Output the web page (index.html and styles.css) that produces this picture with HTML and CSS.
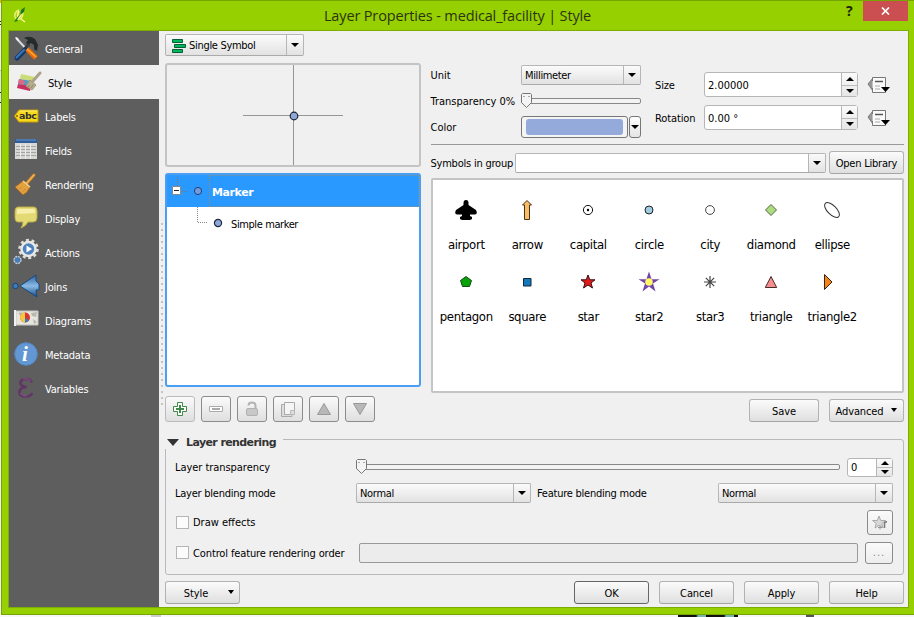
FILE: index.html
```html
<!DOCTYPE html>
<html lang="en">
<head>
<meta charset="utf-8">
<title>Layer Properties - medical_facility | Style</title>
<link rel="stylesheet" href="styles.css">
</head>
<body>
<div class="window">
  <header class="titlebar">
    <svg class="logo" width="14" height="17" viewBox="0 0 14 17"><path d="M6 3Q1 5 2 10Q3 13 7 12Q10 11 10 5" fill="#a9cf17" stroke="#e3ef72" stroke-width="1.500"/><path d="M6 4Q4 7 5 11Q8 11 8 6M8 12L12 15" fill="none" stroke="#fff58a" stroke-width="1.500"/><path d="M12 0L11 5L7 8L8 3Z" fill="#1d7a24"/><path d="M8 6L4 13L5 14L1 15L3 12Z" fill="#1d7a24"/></svg>
    <h1 class="title">Layer Properties - medical_facility | Style</h1>
    <span class="help">?</span>
    <button class="close"><svg width="9" height="8" viewBox="0 0 9 8"><path d="M1 .5L8 7.500M8 .5L1 7.500" stroke="#fff" stroke-width="1.700"/></svg></button>
  </header>
  <div class="content">
    <nav class="sidebar">
      <a class="item"><svg viewBox="0 0 24 24"><path d="M2 2L17 18" stroke="#d6dade" stroke-width="2"/><path d="M1 1l3 1 1 3-2-1z" fill="#fff"/><path d="M10 2Q16-1 21 3L24 9L23 15L20 13L20 9L17 7L14 9L12 7L14 4Z" fill="#252b2d"/><path d="M15 8L8 16" stroke="#343b40" stroke-width="3"/><path d="M3 22L11 14" stroke="#123769" stroke-width="5" stroke-linecap="round"/><path d="M2.500 21.500L10 14" stroke="#3976bb" stroke-width="2" stroke-linecap="round"/><path d="M13 13L22 22" stroke="#e86a08" stroke-width="5"/><path d="M13 13L22 21" stroke="#ffac38" stroke-width="1.500"/></svg><span>General</span></a>
      <a class="item selected"><svg viewBox="0 0 24 24"><path d="M4 4L18 7L16 12L3 9Z" fill="#cbdc78"/><path d="M2 9L15 11L13 17L1 14Z" fill="#4d9bc7"/><path d="M1 14L14 16L13 21L0 18Z" fill="#c9305e"/><path d="M2 9L8 11L7 15L1 13Z" fill="#e0697f"/><path d="M23 3L16 11" stroke="#aaa389" stroke-width="3" stroke-linecap="round"/><path d="M13 10L19 15L15 20L9 16Z" fill="#b9ae8b" stroke="#a0977b"/><path d="M11 17L13 15M14 18L16 15" stroke="#8f866c"/></svg><span>Style</span></a>
      <a class="item"><svg viewBox="0 0 24 24"><path d="M.5 12L5 6H24V18H5Z" fill="#f7da1b" stroke="#c99b09"/><path d="M6 7H23" stroke="#fff170"/><circle cx="3" cy="12" r="1" fill="#806500"/><text class="abc" x="5" y="15">abc</text></svg><span>Labels</span></a>
      <a class="item"><svg viewBox="0 0 24 24"><path d="M1 1H23V21H1Z" fill="#d7d8d4"/><path d="M1 1H23V5H1Z" fill="#315d99"/><path d="M2 2H22" stroke="#6796cc"/><path d="M2 8.500H22M2 11.500H22M2 14.500H22M2 17.500H22" stroke="#a3a6a5"/><path d="M6.500 6V21M11.500 6V21M16.500 6V21" stroke="#ecece8"/></svg><span>Fields</span></a>
      <a class="item"><svg viewBox="0 0 24 24"><path d="M20 3L13 11" stroke="#a66720" stroke-width="3.500" stroke-linecap="round"/><path d="M20 3L12 12" stroke="#e8ae55" stroke-width="2" stroke-linecap="round"/><path d="M9 9L16 15L13 20L9 23L1 15Z" fill="#e3a13f" stroke="#a16a25"/><path d="M9 9L16 15" stroke="#f9d189" stroke-width="1.500"/><path d="M5 17L8 15M8 20L12 17" stroke="#cf8b35"/></svg><span>Rendering</span></a>
      <a class="item"><svg viewBox="0 0 24 24"><path d="M4 1H20Q23 1 23 5V12Q23 16 19 16H14Q12 20 7 22Q9 19 9 16H4Q1 16 1 12V5Q1 1 4 1Z" fill="#e4da75" stroke="#b8ab45"/><path d="M3 8V5Q3 3 5 3H19Q21 3 21 5V7Z" fill="#f6efaa"/></svg><span>Display</span></a>
      <a class="item"><svg viewBox="0 0 24 24"><circle cx="14.500" cy="9" r="9" fill="none" stroke="#dededa" stroke-width="2.500" stroke-dasharray="3 2.650"/><circle cx="14.500" cy="9" r="7" fill="#4f83bf" stroke="#e8e8e6" stroke-width="2.500"/><path d="M12.500 5.500L18 9L12.500 12.500Z" fill="#fff"/><circle cx="3.500" cy="20" r="3.500" fill="#477eb9" stroke="#ccc" stroke-width="1.300" stroke-dasharray="2 .75"/></svg><span>Actions</span></a>
      <a class="item"><svg class="join" viewBox="0 0 28 24"><defs><linearGradient id="jg" x2="0" y2="1"><stop stop-color="#2b5f9d"/><stop offset=".5" stop-color="#8abbe5"/><stop offset="1" stop-color="#164b83"/></linearGradient></defs><circle cx="3.500" cy="12" r="2.700" fill="#3e7bb8" stroke="#16477a"/><path d="M8 12L24 1V7L27 10V16H24L25 23Z" fill="url(#jg)" stroke="#174a80"/></svg><span>Joins</span></a>
      <a class="item"><svg viewBox="0 0 24 24"><path d="M2 3H24V17H2Z" fill="#e6e5de" stroke="#c7c6c1"/><path d="M0 2H2V18H0Z" fill="#f1f1ef"/><path d="M4 5L8 4L7 8ZM17 5L23 4L22 9L18 8ZM19 11L23 14L20 16Z" fill="#b8b8b2"/><circle cx="11" cy="9.500" r="5" fill="#d63730"/><path d="M11 4.500V14.500A5 5 0 0 1 11 4.500Z" fill="#f4c745"/><path d="M11 9.500L15 12.500Q13 14.500 11 14.500Z" fill="#397bb7"/></svg><span>Diagrams</span></a>
      <a class="item"><svg viewBox="0 0 24 24"><circle cx="12" cy="12" r="11.300" fill="#6297d3" stroke="#5288c4"/><text class="info" x="8" y="19">i</text></svg><span>Metadata</span></a>
      <a class="item"><svg viewBox="0 0 24 24"><path d="M17.500 6.500Q17 3 12.500 3Q6.500 3 6.500 7Q6.500 10.500 12.500 11Q5.500 11.500 5.500 16Q5.500 20.500 12 20.500Q17 20.500 18 17" fill="none" stroke="#623567" stroke-width="2.700"/><path d="M17 5Q14 1.500 9 3M6 17Q8 20.500 13 20" fill="none" stroke="#8b6290" stroke-width=".8"/></svg><span>Variables</span></a>
    </nav>
    <div class="splitter"></div>
    <main class="main">
      <div class="combo renderer"><span class="value"><svg width="14" height="15" viewBox="0 0 14 15"><path d="M.5 1.500h10v3h-10zM2.500 6.500h11v3h-11zM.5 11.500h10v3h-10z" fill="#00b85c" stroke="#075d34"/></svg><span>Single Symbol</span></span><i class="drop"></i></div>
      <div class="upper">
        <section class="left">
          <div class="preview"><svg width="252" height="100" viewBox="0 0 252 100"><path d="M126.500 0V100M76 50.500H176" stroke="#969696"/><circle cx="127" cy="51" r="3.800" fill="#8fa6d8" stroke="#1d2431" stroke-width="1.200"/></svg></div>
          <div class="tree">
            <div class="node root"><svg class="expand" width="24" height="32" viewBox="0 0 24 32"><path d="M10.500 2V11M15 16.500H20" stroke="#777" stroke-dasharray="1 1"/><path d="M5.500 11.500H13.500V19.500H5.500Z" fill="#fff" stroke="#888"/><path d="M7 15.500H12" stroke="#222"/></svg><svg class="dot" width="10" height="10"><circle cx="5" cy="5" r="3.600" fill="#719be0" stroke="#23406e"/></svg><b>Marker</b></div>
            <div class="node child"><svg class="branch" width="12" height="32"><path d="M.5 0V15.500H11" fill="none" stroke="#888" stroke-dasharray="1 1"/></svg><svg class="dot" width="10" height="10"><circle cx="5" cy="5" r="3.600" fill="#8fa6d8" stroke="#202a3b" stroke-width="1.200"/></svg><span>Simple marker</span></div>
          </div>
          <div class="tools">
            <button class="tool add"><svg width="16" height="16"><path d="M5.500 1.500h5v4h4v5h-4v4h-5v-4h-4v-5h4z" fill="#fff" stroke="#3f8a48"/><path d="M8 4V12M4 8H12" stroke="#3f8a48" stroke-width="2"/></svg></button>
            <button class="tool"><svg width="16" height="16"><path d="M1.500 5.500h13v5h-13z" fill="#fff" stroke="#aaa"/><path d="M4 8H12" stroke="#aaa" stroke-width="2"/></svg></button>
            <button class="tool"><svg width="16" height="16"><path d="M4.500 4.500Q4.500 1.500 8 1.500Q11.500 1.500 11.500 4.500V8" fill="none" stroke="#b2b2b2" stroke-width="2"/><rect x="2.500" y="7.500" width="11" height="7" rx="1.500" fill="#c8c8c8" stroke="#b2b2b2"/></svg></button>
            <button class="tool"><svg width="16" height="16"><path d="M1.500 3.500H4.500V13.500H12V15.500H1.500Z" fill="#ddd" stroke="#aaa"/><path d="M4.500 1.500H14.500V13.500H4.500Z" fill="#f5f5f5" stroke="#aaa"/><path d="M10.500 9.500H14.500V13.500H10.500Z" fill="#ddd" stroke="#bbb"/></svg></button>
            <button class="tool"><svg width="16" height="16"><path d="M8 2.500L14.500 13.500H1.500Z" fill="#b8b8b8" stroke="#999"/></svg></button>
            <button class="tool"><svg width="16" height="16"><path d="M8 13.500L14.500 2.500H1.500Z" fill="#b8b8b8" stroke="#999"/></svg></button>
          </div>
        </section>
        <section class="right">
          <div class="props">
            <div class="fields">
              <label>Unit</label><div class="combo unit"><span class="value"><span>Millimeter</span></span><i class="drop"></i></div>
              <label>Transparency 0%</label><div class="slider"><svg class="thumb" width="11" height="15"><path d="M1.500.5h8l1 1v8l-5 5-5-5v-8z" fill="#f4f4f4" stroke="#777"/><path d="M2 3.500H4M7 3.500H9" stroke="#aaa"/></svg></div>
              <label>Color</label><div class="color"><button class="swatch"><i></i></button><button class="swatch-drop"></button></div>
            </div>
            <div class="numbers">
              <label>Size</label><div class="spin"><span>2.00000</span><i class="steps"><b></b><b></b></i></div><svg class="define" width="24" height="18" viewBox="0 0 24 18"><path d="M1 8L6 2V15Z" fill="#999" stroke="#777"/><path d="M5.500 5V1.500H18.500V16.500H5.500V12" fill="#fafafa" stroke="#777"/><path d="M8 5.500H16" stroke="#555" stroke-width="1.500"/><path d="M8 10H13M8 13H13" stroke="#aaa"/><path d="M14 11H23L18.500 16Z"/></svg>
              <label>Rotation</label><div class="spin"><span>0.00 °</span><i class="steps"><b></b><b></b></i></div><svg class="define" width="24" height="18" viewBox="0 0 24 18"><path d="M1 8L6 2V15Z" fill="#999" stroke="#777"/><path d="M5.500 5V1.500H18.500V16.500H5.500V12" fill="#fafafa" stroke="#777"/><path d="M8 5.500H16" stroke="#555" stroke-width="1.500"/><path d="M8 10H13M8 13H13" stroke="#aaa"/><path d="M14 11H23L18.500 16Z"/></svg>
            </div>
          </div>
          <div class="library"><label>Symbols in group</label><div class="combo group-select"><span class="value"></span><i class="drop"></i></div><button class="btn"><span>Open Library</span></button></div>
          <div class="symbols">
            <figure><svg viewBox="0 0 32 32"><path d="M13.500 9Q13.500 6 16 6Q18.500 6 18.500 9V11L26 16Q28 20 25 20.500H20V22L22 23V25L20 26H12L10 25V23L12 22V20.500H7Q4 20 6 16L13.500 11Z"/></svg><figcaption>airport</figcaption></figure>
            <figure><svg viewBox="0 0 32 32"><path d="M16 6.500L20.500 11H18.500V25.500H13.500V11H11.500Z" fill="#f8bd66" stroke="#493416"/></svg><figcaption>arrow</figcaption></figure>
            <figure><svg viewBox="0 0 32 32"><circle cx="16" cy="16" r="4.600" fill="#fff" stroke="#111"/><circle cx="16" cy="16" r="1.200"/></svg><figcaption>capital</figcaption></figure>
            <figure><svg viewBox="0 0 32 32"><circle cx="16" cy="16" r="4" fill="#a2cce2" stroke="#222"/></svg><figcaption>circle</figcaption></figure>
            <figure><svg viewBox="0 0 32 32"><circle cx="16" cy="16" r="4.400" fill="#fff" stroke="#444"/></svg><figcaption>city</figcaption></figure>
            <figure><svg viewBox="0 0 32 32"><path d="M16 10.500L21.500 16L16 21.500L10.500 16Z" fill="#acdc80" stroke="#50653e"/></svg><figcaption>diamond</figcaption></figure>
            <figure><svg viewBox="0 0 32 32"><ellipse cx="16" cy="16" rx="9.500" ry="4.500" transform="rotate(45 16 16)" fill="#fff" stroke="#333"/></svg><figcaption>ellipse</figcaption></figure>
            <figure><svg viewBox="0 0 32 32"><path d="M16 10.500L21.500 14.500L19.500 20.500H12.500L10.500 14.500Z" fill="#08a108" stroke="#134c12"/></svg><figcaption>pentagon</figcaption></figure>
            <figure><svg viewBox="0 0 32 32"><path d="M12.500 12.500H20V20H12.500Z" fill="#1478bb" stroke="#142737"/></svg><figcaption>square</figcaption></figure>
            <figure><svg viewBox="0 0 32 32"><path d="M16 9L17.800 13.800H23L19 17L20.500 22L16 19L11.500 22L13 17L9 13.800H14.200Z" fill="#e31a1c" stroke="#391011"/></svg><figcaption>star</figcaption></figure>
            <figure><svg viewBox="0 0 32 32"><path d="M16 5.500L18.600 13.200H26.500L20 17.600L22.500 25.500L16 20.600L9.500 25.500L12 17.600L5.500 13.200H13.400Z" fill="#7443a8"/><circle cx="16" cy="16" r="3.800" fill="#fff866"/></svg><figcaption>star2</figcaption></figure>
            <figure><svg viewBox="0 0 32 32"><path d="M16 10V22M10 16H22M11.800 11.800L20.200 20.200M20.200 11.800L11.800 20.200" stroke="#444" stroke-width="1.200"/></svg><figcaption>star3</figcaption></figure>
            <figure><svg viewBox="0 0 32 32"><path d="M16 10.500L21.700 21.500H10.300Z" fill="#f78e8e" stroke="#482b2b"/></svg><figcaption>triangle</figcaption></figure>
            <figure><svg viewBox="0 0 32 32"><path d="M8.500 8.500L16 16L8.500 23.500Z" fill="#f78416" stroke="#382412"/></svg><figcaption>triangle2</figcaption></figure>
          </div>
          <div class="library-actions"><button class="btn save"><span>Save</span></button><button class="btn advanced"><span>Advanced</span><i class="caret"></i></button></div>
        </section>
      </div>
      <section class="group">
        <h2><i class="fold"></i>Layer rendering</h2>
        <div class="row opacity"><label>Layer transparency</label><div class="slider"><svg class="thumb" width="11" height="15"><path d="M1.500.5h8l1 1v8l-5 5-5-5v-8z" fill="#f4f4f4" stroke="#777"/><path d="M2 3.500H4M7 3.500H9" stroke="#aaa"/></svg></div><div class="spin small"><span>0</span><i class="steps"><b></b><b></b></i></div></div>
        <div class="row blend"><label>Layer blending mode</label><div class="combo"><span class="value"><span>Normal</span></span><i class="drop"></i></div><label class="feature">Feature blending mode</label><div class="combo"><span class="value"><span>Normal</span></span><i class="drop"></i></div></div>
        <div class="row effects"><i class="check"></i><label>Draw effects</label><button class="square star-btn"><svg width="18" height="18"><path d="M8 2L9.700 6.500H14.500L10.800 9.500L12 14L8 11.300L4 14L5.200 9.500L1.500 6.500H6.300Z" fill="#d8d8d8" stroke="#aaa"/><path d="M7 13.500H11M9 11.500V15.500" stroke="#999"/><path d="M13.500 14V9Q14 7.500 16 8" fill="none" stroke="#777" stroke-width="1.500"/></svg></button></div>
        <div class="row order"><i class="check"></i><label>Control feature rendering order</label><div class="order-input"></div><button class="square more">...</button></div>
      </section>
      <footer class="footer"><button class="btn style-btn"><span>Style</span><i class="caret"></i></button><button class="btn default"><span>OK</span></button><button class="btn"><span>Cancel</span></button><button class="btn"><span>Apply</span></button><button class="btn"><span>Help</span></button></footer>
    </main>
  </div>
</div>
<div class="desktop"><i class="d1"></i><i class="d2"></i><i class="d3"></i></div>
</body>
</html>
```
FILE: styles.css
```css
* { box-sizing: border-box; }
body { margin: 0; width: 914px; height: 617px; overflow: hidden; background: linear-gradient(#e8b800 0 3px, #f4f4f4 3px 21px, #222 21px 22px, #f4f4f4 22px 24px, #222 24px 25px, #f4f4f4 25px 70px, #bbb 70px 71px, #dceaf0 71px 92px, #222 92px 93px, #dceaf0 93px 102px, #222 102px 103px, #f4f4f4 103px); color: #000; font: 11px/14px "DejaVu Sans Condensed", "DejaVu Sans", sans-serif; font-stretch: condensed; letter-spacing: -.12px; }
button { font: inherit; letter-spacing: inherit; color: inherit; padding: 0; margin: 0; }
label, span { white-space: nowrap; }
svg { display: block; flex: none; }
i { font-style: normal; }

.window { margin-left: 1px; width: 913px; height: 615px; background: #96d000; border: 1px solid #76a400; border-right: 0; padding: 0 6px 6px 6px; }
.titlebar { height: 29px; display: grid; grid-template-columns: 30px 1fr 18px 45px; }
.logo { margin: 6px 0 0 5px; }
.title { margin: 0; padding: 6px 0 0 32px; text-align: center; font: 14.5px/18px "Open Sans", sans-serif; letter-spacing: -.14px; color: #2c3310; }
.help { padding-left: 1px; font: bold 14px/20px "Open Sans", sans-serif; color: #1d2409; }
.close { height: 20px; border: 0; background: #cb4f50; display: flex; align-items: center; justify-content: center; }
.content { display: flex; width: 901px; height: 578px; border: 1px solid #7dad00; background: #f0f0f0; }

.sidebar { width: 150px; background: #5e5e5e; color: #fff; letter-spacing: -.2px; }
.item { display: flex; align-items: center; height: 34px; padding-left: 5px; gap: 7px; }
.item span { padding-top: 3px; }
.item svg { width: 24px; height: 24px; overflow: visible; }
.item .join { width: 28px; margin: 0 -2px; }
.item.selected { background: #f0f0f0; color: #000; padding-left: 8px; }
.abc { font: bold 9.5px "DejaVu Sans", sans-serif; letter-spacing: -.5px; fill: #333; }
.info { font: italic bold 21px "Liberation Serif", serif; fill: #fff; }
.splitter { width: 6px; height: 188px; margin-top: 190px; background: radial-gradient(circle at 3px 3px, #c5c5c5 1px, transparent 1.500px) 0 0 / 6px 6px; }
.main { width: 743px; padding-top: 3px; }

.combo { display: flex; height: 20px; border: 1px solid #b6b6b6; border-bottom-color: #aaa; border-radius: 2px; background: linear-gradient(#fbfbfb, #e2e2e2); }
.value { flex: 1; display: flex; align-items: center; padding-left: 3px; }
.value span { padding-top: 1px; }
.btn span { padding-top: 2px; }
.drop { width: 17px; border-left: 1px solid #b6b6b6; display: flex; align-items: center; justify-content: center; }
.drop::after, .swatch-drop::after { content: ""; border: 4px solid transparent; border-top-color: #000; border-bottom: 0; }
.renderer { width: 139px; height: 22px; letter-spacing: -.3px; }
.renderer .value { gap: 3px; padding-left: 6px; }
.unit { letter-spacing: -.35px; }
.blend .combo { letter-spacing: -.3px; }

.upper { display: flex; gap: 10px; height: 367px; margin-top: 7px; }
.left { width: 256px; }
.preview { height: 104px; border: 2px solid #c4c4c4; border-radius: 3px; }
.tree { height: 214px; margin-top: 6px; background: #fff; border: 2px solid #4a9ff5; border-radius: 3px; }
.node { display: flex; align-items: center; height: 32px; }
.root { background: #2a99ff; color: #fff; }
.root .expand { margin-right: 2px; }
.root b { flex: 1; height: 32px; margin-left: 6px; padding-left: 2px; border: 1px dotted #8a8f80; font: bold 11px/33px "DejaVu Sans", sans-serif; letter-spacing: -.4px; }
.branch { margin-left: 30px; margin-right: 4px; }
.child .dot { margin-right: 8px; }
.child span { padding-top: 4px; letter-spacing: -.4px; }
.tools { display: flex; gap: 6px; margin-top: 9px; }
.tool { width: 30px; height: 26px; border: 1px solid #8b8b8b; border-radius: 3px; background: linear-gradient(#fafafa, #dfdfdf); display: flex; align-items: center; justify-content: center; }
.add { border-color: #bbb; }

.right { width: 473px; padding-top: 2px; }
.right label { padding-top: 1px; margin-left: -.5px; }
.props { display: flex; gap: 14px; height: 80px; border-bottom: 1px solid #999; }
.fields { display: grid; grid-template-columns: 90px 120px; grid-template-rows: 20px 32px 20px; align-items: center; width: 210px; letter-spacing: 0; }
.slider { position: relative; height: 15px; display: flex; align-items: center; }
.fields .slider { margin-top: -1px; }
.slider::before { content: ""; flex: 1; height: 4px; border: 1px solid #888; border-radius: 2px; background: #f3f3f3; }
.thumb { position: absolute; left: 0; top: 0; }
.color { display: flex; gap: 1px; height: 22px; }
.swatch { width: 107px; padding: 2px 4px; border: 1px solid #777; border-radius: 3px; background: #f4f4f4; }
.swatch i { display: block; height: 16px; border-radius: 3px; background: #94aada; }
.swatch-drop { width: 12px; border: 1px solid #777; border-radius: 3px; background: linear-gradient(#fff, #e4e4e4); display: flex; align-items: center; justify-content: center; }
.numbers { display: grid; grid-template-columns: 49px 154px 24px; grid-template-rows: 25px 25px; row-gap: 8px; padding-top: 7px; align-items: center; }
.numbers label { margin-left: 0; padding-top: 3px; }
.define { margin-left: 9px; }
.spin { display: flex; height: 25px; border: 1px solid #b6b6b6; border-radius: 3px; background: #fff; }
.spin span { flex: 1; padding: 2px 0 0 3px; align-self: center; letter-spacing: 0; }
.steps { width: 16px; display: grid; grid-template-rows: 1fr 1fr; border-left: 1px solid #b6b6b6; background: linear-gradient(#fafafa, #e6e6e6); }
.steps b { display: flex; align-items: center; justify-content: center; }
.steps b + b { border-top: 1px solid #bbb; }
.steps b::after { content: ""; border: 4px solid transparent; border-bottom-color: #000; border-top: 0; }
.steps b + b::after { border: 4px solid transparent; border-top-color: #000; border-bottom: 0; }
.library { display: flex; align-items: center; height: 23px; margin-top: 6px; letter-spacing: -.22px; }
.library label { width: 84.5px; padding-top: 2px; }
.group-select { width: 311px; margin-right: 3px; background: #fff; }
.group-select .drop { background: linear-gradient(#fafafa, #e2e2e2); }
.btn { width: 75px; height: 23px; border: 1px solid #b2b2b2; border-bottom-color: #a5a5a5; border-radius: 3px; background: linear-gradient(#fbfbfb, #dfdfdf); display: flex; align-items: center; justify-content: center; }
.symbols { height: 215px; margin-top: 4px; padding: 14px 0 0 2.500px; border: 2px solid #c4c4c4; border-radius: 2px; background: #fff; display: grid; grid-template-columns: repeat(7, 61px); grid-template-rows: 72px 72px; }
.symbols figure { margin: 0; display: flex; flex-direction: column; align-items: center; }
.symbols svg { width: 32px; height: 32px; }
.symbols figcaption { margin-top: 11px; padding-left: .5px; font-size: 13px; line-height: 16px; letter-spacing: -.35px; }
.library-actions { display: flex; justify-content: flex-end; gap: 10px; margin-top: 6px; }
.save { width: 70px; }
.caret { border: 3px solid transparent; border-top: 4px solid #000; border-bottom: 0; }
.advanced .caret { margin: -2px 0 0 8px; }

.group { width: 739px; height: 136px; margin-top: 9px; border: 1px solid #b9b9b9; border-radius: 3px; padding: 0 10px 0 9px; }
.group h2 { width: 118px; height: 17px; margin: -8px 0 0 -10px; padding: 4px 0 0 2px; display: flex; align-items: center; gap: 7px; background: #f0f0f0; color: #333; font: bold 11px/17px "DejaVu Sans", sans-serif; letter-spacing: -.6px; white-space: nowrap; }
.fold { border: 6px solid transparent; border-top: 7px solid #333; border-bottom: 0; }
.row { display: flex; align-items: center; }
.row label { padding-top: 1px; }
.row > label:first-child { width: 181px; }
.opacity { height: 20px; margin-top: 8px; letter-spacing: -.05px; }
.opacity .slider { width: 484px; margin: -1px 7px 0 0; }
.small { width: 46px; height: 19px; }
.blend { height: 20px; margin-top: 6px; letter-spacing: -.24px; }
.blend .combo { width: 175px; }
.feature { width: 181px; margin-left: 6px; }
.effects { height: 25px; margin-top: 7px; letter-spacing: 0; }
.order { height: 22px; margin-top: 7px; }
.check { width: 13px; height: 13px; margin: -1px 4px 0 1px; border: 1px solid #b5b5b5; background: #fbfbfb; flex: none; }
.square { border: 1px solid #8b8b8b; border-radius: 3px; background: linear-gradient(#fafafa, #ededed); display: flex; align-items: center; justify-content: center; }
.star-btn { width: 26px; height: 25px; margin-left: auto; }
.order label { width: 166px; }
.order-input { width: 499px; height: 20px; border: 1px solid #999; border-radius: 2px; background: #ececec; }
.more { width: 28px; height: 22px; margin-left: 7px; color: #888; letter-spacing: 1px; }
.footer { display: flex; gap: 10px; margin-top: 6px; width: 739px; }
.style-btn { margin-right: auto; padding-left: 13px; }
.style-btn .caret { margin: -1px 0 0 20px; }
.default { border-color: #666; }
.desktop { display: flex; height: 2px; background: #f7f7f7; }
.d1 { width: 10px; margin-left: 151px; background: #ccc; }
.d2 { width: 60px; margin-left: 517px; background: repeating-linear-gradient(90deg, #111 0 18px, #79b5ae 20px 28px); }
.d3 { width: 8px; margin-left: 68px; background: #555; }
```
